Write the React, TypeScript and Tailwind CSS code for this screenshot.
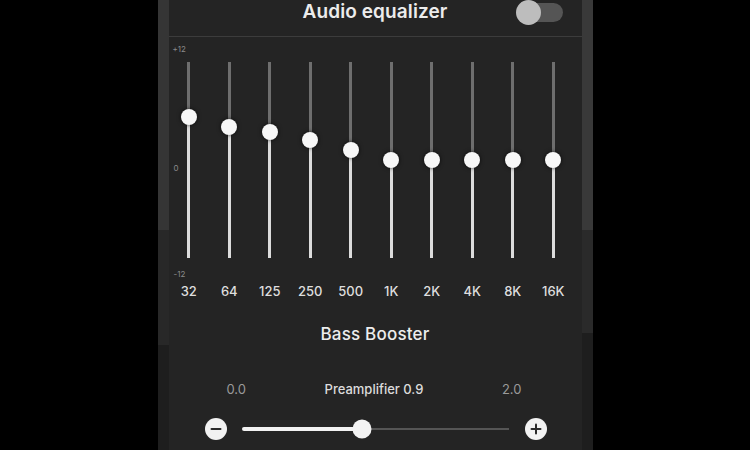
const bands = [
  { label: '32', gain: 5.3 },
  { label: '64', gain: 4.0 },
  { label: '125', gain: 3.4 },
  { label: '250', gain: 2.4 },
  { label: '500', gain: 1.2 },
  { label: '1K', gain: 0 },
  { label: '2K', gain: 0 },
  { label: '4K', gain: 0 },
  { label: '8K', gain: 0 },
  { label: '16K', gain: 0 },
]

const TRACK_HEIGHT = 196
const MAX_GAIN = 12

function EdgeStripe({ side }: { side: 'left' | 'right' }) {
  return (
    <div className="flex w-[11px] flex-col">
      <div className={side === 'left' ? 'h-[230px] bg-[#353535]' : 'h-[230px] bg-[#393939]'} />
      <div className={side === 'left' ? 'h-[115px] bg-[#282828]' : 'h-[103px] bg-[#2a2a2a]'} />
      <div className="flex-1 bg-[#1e1e1e]" />
    </div>
  )
}

function BandSlider({ gain }: { gain: number }) {
  const offset = ((MAX_GAIN - gain) / (MAX_GAIN * 2)) * TRACK_HEIGHT
  return (
    <div className="relative flex h-[196px] justify-center">
      <div className="flex h-full w-[3px] flex-col">
        <div className="bg-[#6e6e6e]" style={{ height: offset }} />
        <div className="flex-1 bg-[#dcdcdc]" />
      </div>
      <div
        className="absolute left-1/2 h-[16px] w-[16px] -translate-x-1/2 -translate-y-1/2 rounded-full bg-[#f7f7f7] shadow-[0_0_4px_rgba(0,0,0,0.7)]"
        style={{ top: offset }}
      />
    </div>
  )
}

function RoundButton({ sign }: { sign: 'minus' | 'plus' }) {
  return (
    <div className="flex h-[22px] w-[22px] items-center justify-center rounded-full bg-[#f2f2f2]">
      <svg width="14" height="14" viewBox="0 0 14 14">
        <path d="M2.5 7h9" stroke="#2a2a2a" strokeWidth="2" strokeLinecap="round" />
        {sign === 'plus' && <path d="M7 2.5v9" stroke="#2a2a2a" strokeWidth="2" strokeLinecap="round" />}
      </svg>
    </div>
  )
}

export default function App() {
  const preamp = 0.9
  const preampMax = 2.0
  const preampPercent = (preamp / preampMax) * 100

  return (
    <main className="flex h-[450px] w-[750px] justify-center overflow-hidden bg-black font-['Inter','Liberation_Sans',sans-serif]">
      <div className="flex w-[435px]">
        <EdgeStripe side="left" />

        <div className="flex w-[413px] flex-col bg-[#242424]">
          {/* header */}
          <div className="grid h-[37px] grid-cols-[1fr_auto_1fr] border-b border-[#3c3c3c]">
            <div />
            <div className="flex h-[24px] items-center text-[19px] font-semibold tracking-[0.1px] text-[#ececec]">Audio equalizer</div>
            <div className="flex h-[25px] items-start justify-end pr-[19px]">
              <div className="relative mt-[3px] h-[19px] w-[37px] rounded-full bg-[#555555]">
                <div className="absolute -left-[10px] -top-[3px] h-[25px] w-[25px] rounded-full bg-[#bdbdbd]" />
              </div>
            </div>
          </div>

          {/* equalizer */}
          <div className="relative pt-[25px]">
            <span className="absolute left-[4px] top-[6px] text-[8px] text-[#8a8a8a]">+12</span>
            <span className="absolute left-[5px] top-[125px] text-[8px] text-[#8a8a8a]">0</span>
            <span className="absolute left-[5px] top-[231px] text-[8px] text-[#8a8a8a]">-12</span>
            <div className="grid w-[405px] grid-cols-10">
              {bands.map((band) => (
                <BandSlider key={band.label} gain={band.gain} />
              ))}
            </div>
            <div className="mt-[25px] grid w-[405px] grid-cols-10">
              {bands.map((band) => (
                <span key={band.label} className="text-center text-[13px] font-medium leading-[16px] text-[#dedede]">
                  {band.label}
                </span>
              ))}
            </div>
          </div>

          {/* bass booster */}
          <div className="mt-[25px] text-center text-[17px] font-medium leading-[20px] tracking-[0.2px] text-[#ededed]">Bass Booster</div>

          <div className="mt-[37px] flex justify-between pl-[58px] pr-[60px] text-[13px] leading-[16px]">
            <span className="text-[#9a9a9a]">0.0</span>
            <span className="font-medium text-[#dcdcdc]">Preamplifier {preamp.toFixed(1)}</span>
            <span className="text-[#9a9a9a]">{preampMax.toFixed(1)}</span>
          </div>

          <div className="mt-[21px] flex items-center pl-[36px]">
            <RoundButton sign="minus" />
            <div className="relative ml-[15px] flex h-[4px] w-[267px] items-center">
              <div className="h-[4px] rounded-full bg-[#f2f2f2]" style={{ width: `${preampPercent}%` }} />
              <div className="h-[2px] flex-1 bg-[#555555]" />
              <div
                className="absolute top-1/2 h-[19px] w-[19px] -translate-x-1/2 -translate-y-1/2 rounded-full bg-[#f2f2f2]"
                style={{ left: `${preampPercent}%` }}
              />
            </div>
            <div className="ml-[16px]">
              <RoundButton sign="plus" />
            </div>
          </div>
        </div>

        <EdgeStripe side="right" />
      </div>
    </main>
  )
}
